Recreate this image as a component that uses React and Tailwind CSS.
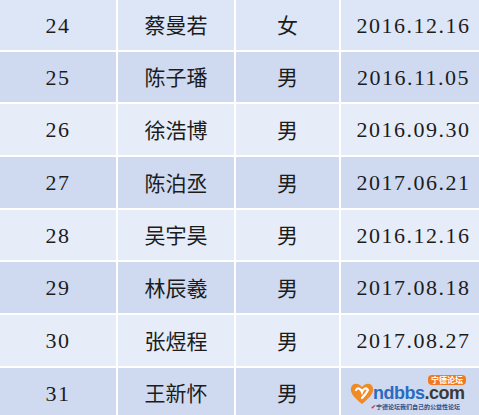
const rows = [
  { no: '24', name: '蔡曼若', sex: '女', date: '2016.12.16', h: 'h-[50px]', bg: 'bg-[#dde6f6]' },
  { no: '25', name: '陈子璠', sex: '男', date: '2016.11.05', h: 'h-[50px]', bg: 'bg-[#cfdaf1]' },
  { no: '26', name: '徐浩博', sex: '男', date: '2016.09.30', h: 'h-[51px]', bg: 'bg-[#e7edf8]' },
  { no: '27', name: '陈泊丞', sex: '男', date: '2017.06.21', h: 'h-[51px]', bg: 'bg-[#cfdaf1]' },
  { no: '28', name: '吴宇昊', sex: '男', date: '2016.12.16', h: 'h-[50px]', bg: 'bg-[#e7edf8]' },
  { no: '29', name: '林辰羲', sex: '男', date: '2017.08.18', h: 'h-[51px]', bg: 'bg-[#cfdaf1]' },
  { no: '30', name: '张煜程', sex: '男', date: '2017.08.27', h: 'h-[51px]', bg: 'bg-[#e7edf8]' },
  { no: '31', name: '王新怀', sex: '男', date: '', h: 'h-[50px]', bg: 'bg-[#cfdaf1]' },
];

const num = "font-['Liberation_Serif',serif] text-[22px] tracking-[1.5px]";
const cjk = "font-['Noto_Sans_CJK_SC',sans-serif] text-[21px]";

function Watermark() {
  return (
    <div className="absolute left-[349px] top-[373px] w-[122px] h-[40px] pointer-events-none">
      <svg className="absolute left-0 top-[7px]" width="26" height="26" viewBox="0 0 26 26">
        <path d="M13 24 C4 17 1 12 2 8 C3 3 9 2 13 7 C17 2 23 3 24 8 C25 12 22 17 13 24 Z" fill="#f08a24" />
        <path d="M7 10 C9 7 12 9 13 12 C14 9 17 7 19 10 C17 14 15 16 13 18" fill="none" stroke="#fff" strokeWidth="2.2" strokeLinecap="round" />
      </svg>
      <div className="absolute left-[24px] top-[11px] flex items-baseline leading-none font-['Liberation_Sans',sans-serif] font-bold text-[18px] tracking-[-0.5px]">
        <span className="text-[#2a6bc0]">ndbbs</span>
        <span className="text-[#3a3a3a]">.com</span>
      </div>
      <div className="absolute left-[79px] top-[2px] px-[3px] rounded-[4px] bg-[#f07a22] text-white leading-[10px] text-[8px] font-bold font-['Noto_Sans_CJK_SC',sans-serif]">
        宁德论坛
      </div>
      <div className="absolute left-[22px] top-[31px] whitespace-nowrap leading-none text-[6px] text-[#2a4f8a] font-bold font-['Noto_Sans_CJK_SC',sans-serif]">
        <span className="text-[#d23a2a]">✔</span>宁德论坛我们自己的公益性论坛
      </div>
    </div>
  );
}

export default function App() {
  return (
    <div className="relative w-[479px] h-[415px] overflow-hidden bg-white text-[#1c1c1c]">
      <div className="flex flex-col gap-[2px] w-[486px]">
        {rows.map((r) => (
          <div key={r.no} className={`grid grid-cols-[116px_116px_103px_145px] gap-[2px] ${r.h}`}>
            <div className={`flex items-center justify-center ${r.bg} ${num}`}>{r.no}</div>
            <div className={`flex items-center justify-center ${r.bg} ${cjk}`}>{r.name}</div>
            <div className={`flex items-center justify-center ${r.bg} ${cjk}`}>{r.sex}</div>
            <div className={`flex items-center justify-center ${r.bg} ${num}`}>{r.date}</div>
          </div>
        ))}
      </div>
      <Watermark />
    </div>
  );
}
